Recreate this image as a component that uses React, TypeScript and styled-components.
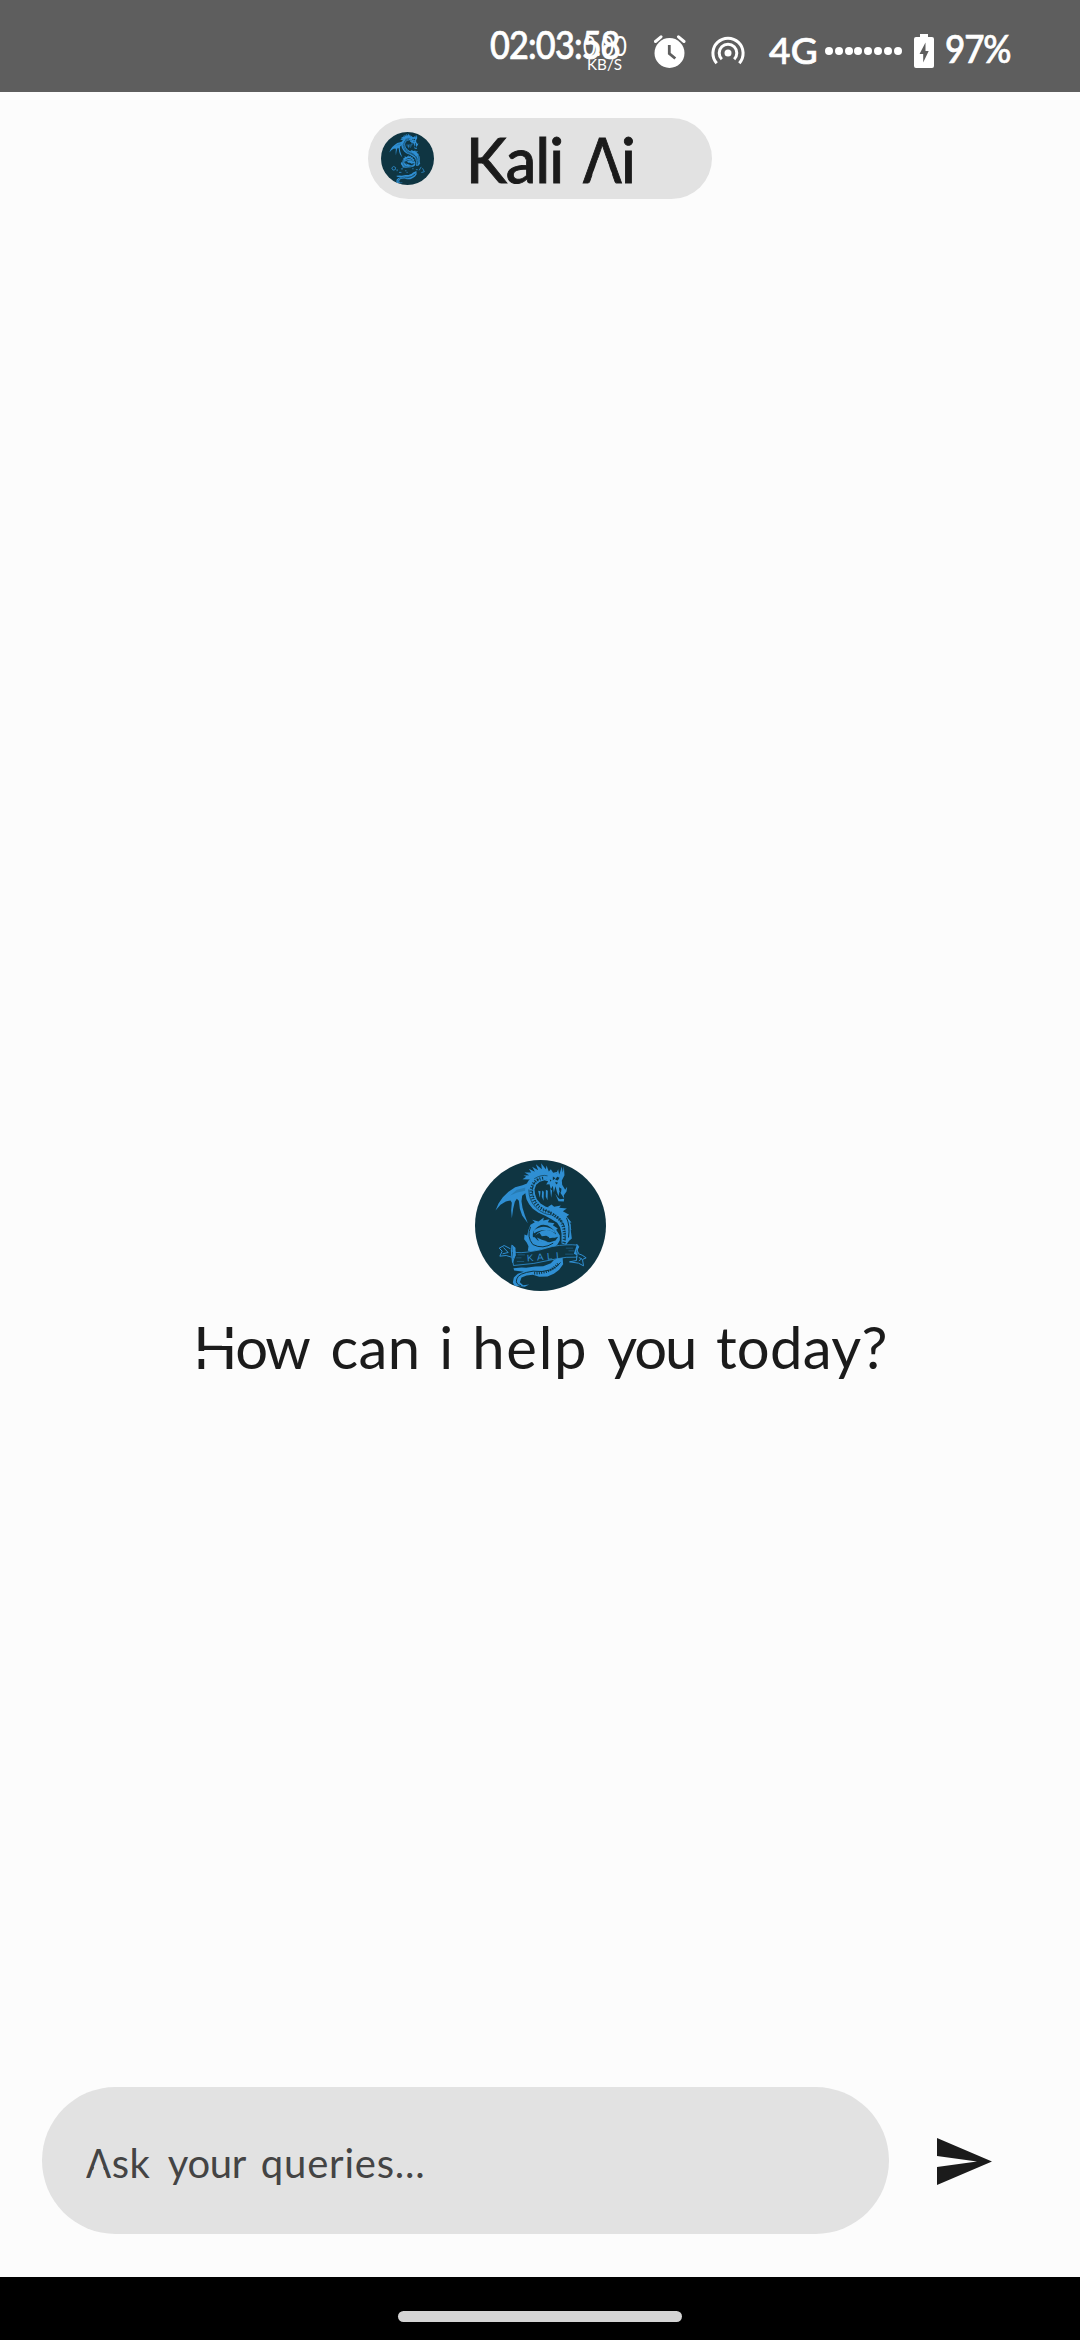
import React from 'react';
import styled, { createGlobalStyle } from 'styled-components';

const ink = '#1b1b1b';
const paper = '#fcfcfc';
const pill = '#e2e2e2';
const navy = '#0f3542';
const azure = '#2f8fd3';

const Global = createGlobalStyle`
  * { box-sizing: border-box; }
  body { margin: 0; background: ${paper}; font-family: Lato, "Open Sans", sans-serif; color: ${ink}; }
`;

const Screen = styled.div`
  width: 1080px;
  height: 2340px;
  display: flex;
  flex-direction: column;
  background: ${paper};
  overflow: hidden;
`;

/* ---------- status bar ---------- */

const StatusBar = styled.div`
  height: 92px;
  flex: none;
  display: flex;
  align-items: flex-start;
  padding-left: 490px;
  background: #5e5e5e;
  color: #fff;
`;

const StatusItem = styled.div<{ $w: number; $top: number; $gap?: number }>`
  position: relative;
  flex: none;
  width: ${p => p.$w}px;
  margin-top: ${p => p.$top}px;
  margin-left: ${p => p.$gap ?? 0}px;
  white-space: nowrap;

  svg { display: block; }
`;

const StatusText = styled.span<{ $size: number; $squeeze?: number; $track?: number; $light?: boolean }>`
  display: block;
  width: max-content;
  font-size: ${p => p.$size}px;
  line-height: ${p => p.$size}px;
  font-weight: ${p => (p.$light ? 400 : 500)};
  -webkit-text-stroke: ${p => (p.$light ? 0 : 0.7)}px #fff;
  letter-spacing: ${p => p.$track ?? 0}px;
  transform: scaleX(${p => p.$squeeze ?? 1});
  transform-origin: 0 0;
`;

const Speed = styled.div`
  position: absolute;
  left: 93px;
  top: 7px;
  width: 44px;
  display: flex;
  flex-direction: column;
`;

const SpeedUnit = styled.div`
  padding-left: 4px;
  margin-top: -3px;
`;

const Dots = styled.div`
  display: flex;
  gap: 1.8px;
`;

const Dot = styled.i`
  width: 8px;
  height: 8px;
  border-radius: 50%;
  background: #fff;
`;

/* ---------- lettering ---------- */

const Word = styled.span<{ $track?: number; $before?: number }>`
  display: inline-block;
  letter-spacing: ${p => p.$track ?? 0}px;
  margin-left: ${p => p.$before ?? 0}px;
`;

const OpenA = styled.span<{ $bg: string }>`
  position: relative;
  display: inline-block;
  transform: scaleX(0.93);
  transform-origin: 0 0;
  margin-right: -0.045em;

  &::after {
    content: '';
    position: absolute;
    left: 0.155em;
    top: 0.47em;
    width: 0.37em;
    height: 0.28em;
    background: ${p => p.$bg};
    clip-path: polygon(32% 0, 68% 0, 98% 100%, 2% 100%);
  }
`;

const BrokenH = styled.span`
  position: relative;
  display: inline-block;

  &::before,
  &::after {
    content: '';
    position: absolute;
    width: 12px;
    height: 8px;
    background: ${paper};
  }
  &::before { left: 1px; top: 33px; }
  &::after { right: 1px; top: 20px; }
`;

/* ---------- page ---------- */

const Header = styled.header`
  display: flex;
  justify-content: center;
  padding: 26px 0 0 0;
`;

const TitlePill = styled.div`
  width: 344px;
  height: 81px;
  display: flex;
  align-items: center;
  padding-left: 13px;
  border-radius: 41px;
  background: ${pill};
`;

const Title = styled.h1`
  margin: 2px 0 0 32px;
  font-size: 61px;
  line-height: 61px;
  font-weight: 500;
  -webkit-text-stroke: 0.9px ${ink};
  white-space: nowrap;
`;

const Main = styled.main`
  flex: 1;
  display: flex;
  flex-direction: column;
  align-items: center;
  padding-top: 961px;
`;

const Greeting = styled.p`
  margin: 27px 0 0 1px;
  font-size: 58px;
  line-height: 58px;
  white-space: nowrap;
`;

const Composer = styled.div`
  display: flex;
  align-items: center;
  padding: 0 0 43px 42px;
`;

const Field = styled.div`
  width: 847px;
  height: 147px;
  padding: 56px 0 0 44px;
  border-radius: 74px;
  background: ${pill};
  color: #444;
  font-size: 40px;
  line-height: 40px;
  white-space: nowrap;
`;

const SendButton = styled.button`
  margin: 2px 0 0 48px;
  padding: 0;
  border: 0;
  background: none;
  svg { display: block; }
`;

const NavBar = styled.div`
  height: 63px;
  flex: none;
  display: flex;
  justify-content: center;
  padding-top: 34px;
  background: #000;
`;

const Handle = styled.div`
  width: 284px;
  height: 11px;
  border-radius: 6px;
  background: #d4d4d4;
`;

function Dragon({ size, banner = true }: { size: number; banner?: boolean }) {
  return (
    <svg width={size} height={size} viewBox="44.5 29.5 393 393">
      <defs>
        <clipPath id={`disc${size}`}><circle cx="241" cy="226" r="196.5" /></clipPath>
      </defs>
      <circle cx="241" cy="226" r="196.5" fill={navy} />
      <g clipPath={`url(#disc${size})`} fill={azure}>
        {/* wing */}
        <path d="M206 98L187 105 165 111 145 125 128 141 115 160 106 181 121 164 137 154 151 151 155 158 153 180 155 204 159 176 164 155 170 146 176 152 179 176 186 196 203 219 194 195 187 173 184 153 186 137 199 126Z" />
        <path d="M196 112L170 119 150 136 171 127 195 122Z" fill={navy} opacity=".2" />
        {/* neck and body */}
        <path d="M272 67L249 66 229 70 212 81 202 96 196 111 195 128 199 147 207 162 218 176 235 188 255 197 274 207 291 218 300 232 304 250 304 280 318 284 327 272 335 265 332 242 332 224 325 207 314 193 297 182 276 174 257 170 241 160 230 147 225 133 223 118 228 104 239 95 254 90 268 86Z" />
        {/* back spikes */}
        <path d="M205 88L187 87 198 80 190 76 207 75 193 67 213 67 206 56 224 65 216 50 234 60 227 42 245 57 243 39 257 57 259 46 266 64 272 57 279 68 292 65 286 74 260 75 228 78Z" />
        <path d="M262 171L274 163 282 170 302 166 297 173 320 175 308 183 327 194 319 199 334 217 326 218 334 240 326 234 315 205 296 188Z" />
        {/* head */}
        <path d="M252 75L268 70 288 71 294 57 297 73 302 59 304 49 308 67 311 48 313 75 305 91 306 104 315 119 321 110 319 124 311 135 312 145 304 133 298 123 295 138 290 124 286 108 281 127 278 107 272 117 268 102 258 103 264 93 254 91 264 84Z" />
        <path d="M234 122l7 1-2 20zM246 121l5 4-1 27-5-12zM257 119l6 3-1 28-5-10zM270 116l6 5-3 22zM285 130l8 12 6 5 13-1-1 8-16-1z" />
        <path d="M278 79l8 5-8 6zM291 80l7 3-5 8-8-2zM285 95l9 3-6 5zM297 111l7 5-2 13-5-9zM269 88l5 2-4 5z" fill={navy} />
        <path d="M222 86Q244 72 262 77M206 118Q206 151 227 172T274 194Q303 207 314 231" fill="none" stroke={navy} strokeWidth="2" />
        {/* scales */}
        <g fill="none" stroke={navy}>
          <path d="M249 84Q217 89 213 119Q211 157 248 179Q279 188 301 211Q317 235 311 278" strokeWidth="9" strokeDasharray="3 5" />
          <path d="M235 87Q214 100 217 128Q222 159 255 181Q289 191 308 218Q318 243 314 280" strokeWidth="4" strokeDasharray="5 3 2 4" />
          <path d="M319 203Q330 226 325 262" strokeWidth="3" />
        </g>
        {/* coil */}
        <path d="M205 288L200 278 192 267 193 253 201 256 205 239 211 224 224 216 216 209 235 214 251 202 249 211 268 207 263 216 283 219 278 225 293 235 288 239 299 256 299 270 292 283 280 292 247 297 215 303 203 302Z" />
        <path d="M218 260Q216 239 235 228T275 234Q285 241 288 253Q267 234 246 242Q232 246 222 262Z" fill={navy} />
        <path d="M221 241Q250 219 282 241L287 249Q252 229 221 250Z" fill={azure} />
        <path d="M221 258L238 248 245 258 258 257 270 263 284 263 294 260 286 271 269 276 249 275 232 270Z" fill={navy} />
        <path d="M230 262L245 269 263 274 250 276 237 273zM263 256l14 7-9 1z" fill={azure} />
        <path d="M211 230Q199 260 218 283Q248 299 279 279" fill="none" stroke={navy} strokeWidth="3" />
        {/* tail */}
        <path d="M307 318L309 342 297 359 281 371 262 379 237 380 218 374 199 376 184 382 179 396 189 405 207 403 194 410 163 407 158 397 161 382 173 371 191 365 162 361 160 354 184 352 198 353 225 349 249 348 272 339 282 329Z" />
        <path d="M301 337Q276 370 219 363Q174 369 170 386Q164 402 183 407" fill="none" stroke={navy} strokeWidth="3" />
        <path d="M294 341Q271 369 222 369" fill="none" stroke={navy} strokeWidth="8" strokeDasharray="3 4" />
      </g>
      {banner ? (
        <g>
          <path d="M153 300Q162 311 200 306Q240 301 276 289Q321 281 353 285L350 321Q319 319 284 327Q220 343 160 346Z" fill={navy} stroke={azure} strokeWidth="2.5" />
          <path d="M155 285L162 290 165 315 157 337 154 306zM151 296L132 286 117 294 126 303 119 318 138 316 154 321M130 292l14 15-17 4M353 310L366 315 378 323 367 328 370 347 355 339 328 335 349 331 350 317M356 322l9 4-9 6M349 282l7 8-6 10 5 8" fill="none" stroke={azure} strokeWidth="3" />
          <path d="M156 287l10 6 0 24-7 10zM350 284l5 5-7 12 3 15-10-5z" fill={azure} />
          <path d="M172 314h22M168 323h16M170 334h22M317 294h22M315 312h25M325 302h18" stroke={azure} strokeWidth="1.5" opacity=".75" />
          <text x="201" y="334" transform="rotate(-5 201 334)" fontFamily="Liberation Sans, sans-serif" fontSize="29" letterSpacing="11" fill={azure}>KALI</text>
        </g>
      ) : (
        <g fill="none" stroke={azure} strokeWidth="6">
          <path d="M164 300Q230 325 300 300L355 300" stroke={navy} strokeWidth="34" />
          <path d="M124 296l14-11 15 8-3 16-17 3zM164 306v14M192 303h16M224 317h9M276 302h10M303 309h14M327 314l16-26M352 298l14 26-22 6M178 329h18M234 329h8" />
        </g>
      )}
    </svg>
  );
}

export default function App() {
  return (
    <>
      <Global />
      <Screen>
        <StatusBar>
          <StatusItem $w={130} $top={25}>
            <StatusText $size={38} $squeeze={0.9} $track={-0.9}>02:03:58</StatusText>
            <Speed>
              <StatusText $size={27} $squeeze={0.82} $light>0.00</StatusText>
              <SpeedUnit>
                <StatusText $size={16} $squeeze={0.95} $light>KB/S</StatusText>
              </SpeedUnit>
            </Speed>
          </StatusItem>
          <StatusItem $w={32} $top={35} $gap={34}>
            <svg width="32" height="34" viewBox="0 0 32 34">
              <circle cx="15.5" cy="18" r="15" fill="#fff" />
              <path d="M1.500 6.500L7 1.800M30 6.500L24.500 1.800" stroke="#fff" strokeWidth="3" strokeLinecap="round" />
              <path d="M15.300 10v8.500l6 5" fill="none" stroke="#5e5e5e" strokeWidth="2.8" />
            </svg>
          </StatusItem>
          <StatusItem $w={34} $top={36} $gap={25}>
            <svg width="34" height="30" viewBox="0 0 34 30" fill="none" stroke="#fff" strokeWidth="3">
              <circle cx="17" cy="17" r="3.5" fill="#fff" stroke="none" />
              <path d="M10.800 23.200A8.800 8.800 0 1 1 23.200 23.200" />
              <path d="M5.700 27.300A15.100 15.100 0 1 1 28.300 27.300" />
            </svg>
          </StatusItem>
          <StatusItem $w={48} $top={31} $gap={24}>
            <StatusText $size={37} $track={0.3}>4G</StatusText>
          </StatusItem>
          <StatusItem $w={77} $top={47} $gap={8}>
            <Dots>{Array.from({ length: 8 }, (_, i) => <Dot key={i} />)}</Dots>
          </StatusItem>
          <StatusItem $w={20} $top={34} $gap={12}>
            <svg width="20" height="34" viewBox="0 0 20 34">
              <path d="M6 0h8v3h4a2 2 0 0 1 2 2v27a2 2 0 0 1-2 2H2a2 2 0 0 1-2-2V5a2 2 0 0 1 2-2h4z" fill="#fff" />
              <path d="M11.500 8.500L5.500 20h3.700v8.500L14.700 17h-3.200z" fill="#5e5e5e" />
            </svg>
          </StatusItem>
          <StatusItem $w={66} $top={29} $gap={11}>
            <StatusText $size={38} $squeeze={0.92} $track={-1.2}>97%</StatusText>
          </StatusItem>
        </StatusBar>

        <Header>
          <TitlePill>
            <Dragon size={53} banner={false} />
            <Title>
              <Word $track={-0.8}>Kali</Word>{' '}
              <Word $before={4} $track={-0.5}><OpenA $bg={pill}>A</OpenA>i</Word>
            </Title>
          </TitlePill>
        </Header>

        <Main>
          <Dragon size={131} />
          <Greeting>
            <Word $track={-2.4}><BrokenH>H</BrokenH>ow</Word>{' '}
            <Word $before={7.2} $track={0.4}>can</Word>{' '}
            <Word $before={3.9}>i</Word>{' '}
            <Word $before={4.2} $track={1.7}>help</Word>{' '}
            <Word $before={4.1} $track={-2.1}>you</Word>{' '}
            <Word $before={5.8} $track={0.3}>today?</Word>
          </Greeting>
        </Main>

        <Composer>
          <Field>
            <Word $track={0.5}><OpenA $bg={pill}>A</OpenA>sk</Word>{' '}
            <Word $before={7} $track={-0.3}>your</Word>{' '}
            <Word $before={4.5} $track={0.8}>queries...</Word>
          </Field>
          <SendButton aria-label="Send">
            <svg width="55" height="47" viewBox="0 0 55 47">
              <path d="M0 0L55 23.500 0 47V29L40 23.500 0 18z" fill={ink} />
            </svg>
          </SendButton>
        </Composer>

        <NavBar><Handle /></NavBar>
      </Screen>
    </>
  );
}
